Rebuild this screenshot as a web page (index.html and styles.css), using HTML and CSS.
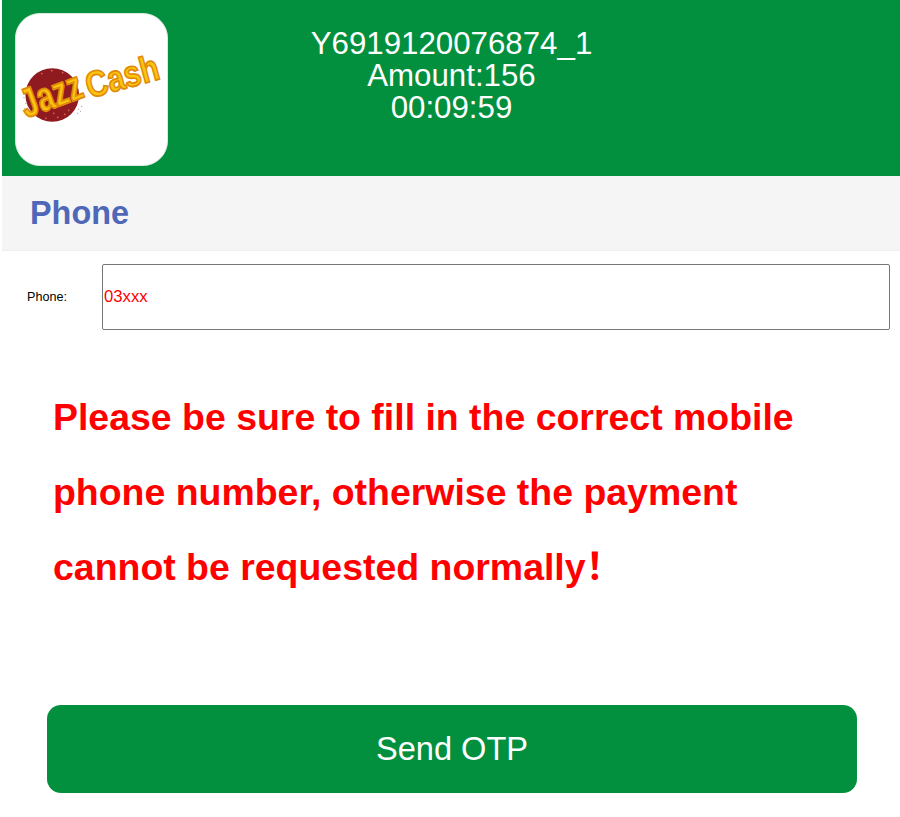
FILE: index.html
```html
<!DOCTYPE html>
<html lang="en">
<head>
<meta charset="utf-8">
<title>Send OTP</title>
<link rel="stylesheet" href="styles.css">
</head>
<body>
<header class="top">
  <div class="logo">
    <svg class="logo-art" viewBox="0 0 152 152" width="151" height="151">
      <circle cx="36.5" cy="81.5" r="27" fill="#8f1a1f"/>
      <g fill="#d8684f">
        <circle cx="26" cy="60" r="0.9"/><circle cx="36" cy="57" r="0.9"/><circle cx="47" cy="59" r="0.9"/>
        <circle cx="55" cy="65" r="0.9"/><circle cx="30" cy="105" r="0.9"/><circle cx="42" cy="104" r="0.9"/>
        <circle cx="53" cy="97" r="0.9"/><circle cx="49" cy="101" r="0.9"/><circle cx="38" cy="100" r="0.9"/>
      </g>
      <g fill="#c9a0a0">
        <circle cx="9" cy="78" r="0.7"/><circle cx="8" cy="84" r="0.7"/><circle cx="10" cy="90" r="0.7"/><circle cx="9" cy="95" r="0.7"/>
        <circle cx="63" cy="96" r="0.7"/><circle cx="66" cy="93" r="0.7"/><circle cx="62" cy="100" r="0.7"/><circle cx="65" cy="98" r="0.7"/>
      </g>
      <text class="logo-mark" transform="translate(10 105) rotate(-20) scale(0.92 1.25)">Jazz</text>
      <text class="logo-mark" transform="translate(74 85) rotate(-15.5) scale(0.93 1.12)">Cash</text>
    </svg>
  </div>
  <div class="order">
    <div>Y6919120076874_1</div>
    <div>Amount:156</div>
    <div>00:09:59</div>
  </div>
</header>
<section class="title-bar"><h1 class="title">Phone</h1></section>
<form class="form">
  <div class="field">
    <label class="field-label" for="phone">Phone:</label>
    <input class="field-input" id="phone" type="text" value="03xxx">
  </div>
  <p class="warning">Please be sure to fill in the correct mobile phone number, otherwise the payment cannot be requested normally<span class="bang">！</span></p>
  <div class="actions"><button class="send" type="button">Send OTP</button></div>
</form>
</body>
</html>
```
FILE: styles.css
```css
* { box-sizing: border-box; }
html, body { margin: 0; padding: 0; background: #fff; }
body {
  height: 817px;
  overflow: hidden;
  padding-left: 2px;
  font-family: "Liberation Sans", Arial, sans-serif;
}
.top {
  display: flex;
  height: 176px;
  background: #03903e;
  padding: 13px 0 0 13px;
}
.logo {
  width: 153px;
  height: 153px;
  background: #fff;
  border-radius: 25px;
  border: 1px solid #d9eadf;
  flex: none;
}
.logo-art { display: block; }
.logo-mark {
  font-family: "Liberation Sans", Arial, sans-serif;
  font-size: 33px;
  font-weight: 700;
  fill: #fcc30f;
  stroke: #e08a0a;
  stroke-width: 1.5px;
}
.order {
  flex: 1;
  padding: 15px 165px 0 0;
  text-align: center;
  color: #fff;
  font-size: 31.25px;
  line-height: 32px;
}
.title-bar {
  height: 75px;
  background: #f5f5f5;
  border-bottom: 1px solid #eeeeee;
  padding: 0 0 0 28px;
  display: flex;
  align-items: center;
}
.title {
  margin: 0;
  font-size: 32.4px;
  font-weight: 700;
  color: #4f67b8;
}
.form { display: block; }
.field {
  display: flex;
  align-items: center;
  padding: 13px 10px 0 25px;
}
.field-label {
  width: 75px;
  flex: none;
  font-size: 12.6px;
  color: #000;
}
.field-input {
  flex: 1;
  min-width: 0;
  height: 66px;
  padding: 0 1px;
  border: 1px solid #767676;
  border-radius: 2px;
  background: #fff;
  color: #f00;
  font-family: inherit;
  font-size: 16.7px;
  outline: none;
}
.warning {
  margin: 50px 40px 0 51px;
  font-size: 37.45px;
  line-height: 75px;
  font-weight: 700;
  color: #f00;
}
.bang { font-family: "Noto Sans CJK SC", sans-serif; line-height: 0; }
.actions { padding: 100px 43px 0 45px; }
.send {
  display: block;
  width: 100%;
  height: 88px;
  border: 0;
  border-radius: 14px;
  background: #03903e;
  color: #fff;
  font-family: inherit;
  font-size: 32.6px;
}
```
